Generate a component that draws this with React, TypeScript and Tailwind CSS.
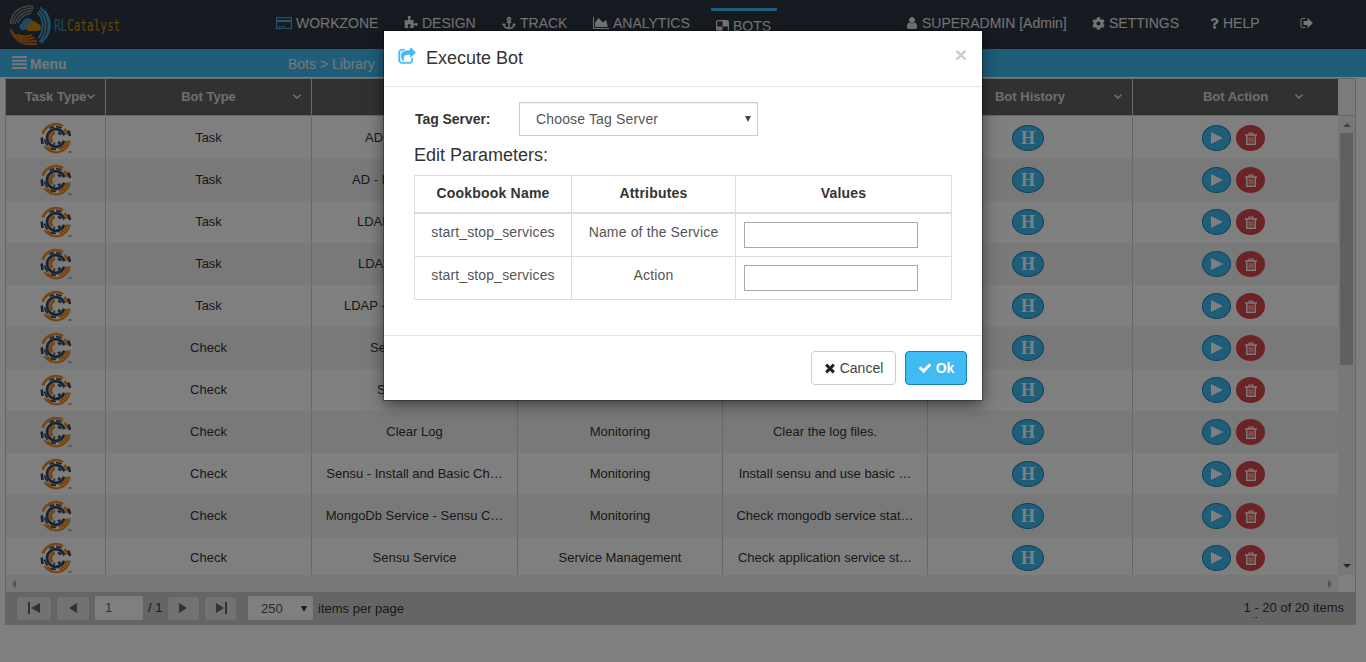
import React from "react";
import { FaAnchor, FaCog, FaQuestion } from "react-icons/fa";

const PATHS = {
  puzzle:
    "M1755 1083q0 81-44.5 135t-123.5 54q-41 0-77.5-17.5t-59-38-56.5-38-71-17.5q-110 0-110 124 0 39 16 115t15 115v5q-22 0-33 1-34 3-97.5 11.5t-115.5 13.5-98 5q-61 0-103-26.5t-42-83.5q0-37 17.5-71t38-56.5 38-59 17.5-77.5q0-79-54-123.5t-135-44.5q-84 0-143 45.5t-59 127.5q0 43 15 83t33.5 64.5 33.5 53 15 50.5q0 45-46 89-37 35-117 35-95 0-245-24-9-2-27.5-4t-27.5-4l-13-2q-1 0-3-1-2 0-2-1v-1024q2 1 17.5 3.5t34 5 21.5 3.5q150 24 245 24 80 0 117-35 46-44 46-89 0-22-15-50.5t-33.5-53-33.5-64.5-15-83q0-82 59-127.5t144-45.5q80 0 134 44.5t54 123.5q0 41-17.5 77.5t-38 59-38 56.5-17.5 71q0 57 42 83.5t103 26.5q64 0 180-15t163-17v2q-1 2-3.5 17.5t-5 34-3.5 21.5q-24 150-24 245 0 80 35 117 44 46 89 46 22 0 50.5-15t53-33.5 64.5-33.5 83-15q82 0 127.5 59t45.5 143z",
  area: "M2048 1536v128h-2048v-1536h128v1408h1920zm-384-1024l256 896h-1664v-576l448-576 576 576z",
  user: "M1536 1399q0 109-62.5 187t-150.5 78h-854q-88 0-150.5-78t-62.5-187q0-85 8.5-160.5t31.5-152 58.5-131 94-89 134.5-34.5q131 128 313 128t313-128q76 0 134.5 34.5t94 89 58.5 131 31.5 152 8.5 160.5zm-256-887q0 159-112.5 271.5t-271.5 112.5-271.5-112.5-112.5-271.5 112.5-271.5 271.5-112.5 271.5 112.5 112.5 271.5z",
  signOut:
    "M704 1440q0 4 1 20t.5 26.5-3 23.5-10 19.5-20.5 6.5h-320q-119 0-203.5-84.5t-84.5-203.5v-704q0-119 84.5-203.5t203.5-84.5h320q13 0 22.5 9.5t9.5 22.5q0 4 1 20t.5 26.5-3 23.5-10 19.5-20.5 6.5h-320q-66 0-113 47t-47 113v704q0 66 47 113t113 47h312l11.5 1 11.5 3 8 5.5 7 9 2 13.5zm928-544q0 26-19 45l-544 544q-19 19-45 19t-45-19-19-45v-288h-448q-26 0-45-19t-19-45v-384q0-26 19-45t45-19h448v-288q0-26 19-45t45-19 45 19l544 544q19 19 19 45z",
  share:
    "M1472 989v259q0 119-84.5 203.5t-203.5 84.5h-832q-119 0-203.5-84.5t-84.5-203.5v-832q0-119 84.5-203.5t203.5-84.5h255q13 0 22.5 9.5t9.5 22.5q0 27-26 32-77 26-133 60-10 4-16 4h-112q-66 0-113 47t-47 113v832q0 66 47 113t113 47h832q66 0 113-47t47-113v-214q0-19 18-29 28-13 54-37 16-16 35-8 21 9 21 29zm237-496l-384 384q-18 19-45 19-12 0-25-5-39-17-39-59v-192h-160q-323 0-438 131-119 137-74 473 3 23-20 34-8 2-12 2-16 0-26-13-10-14-21-31t-39.5-68.5-49.5-99.5-38.5-114-17.5-122q0-49 3.5-91t14-90 28-88 47-81.5 68.5-74 94.5-61.5 124.5-48.5 159.5-30.5 196.5-11h160v-192q0-42 39-59 13-5 25-5 26 0 45 19l384 384q19 19 19 45t-19 45z",
  times:
    "M1490 1322q0 40-28 68l-136 136q-28 28-68 28t-68-28l-294-294-294 294q-28 28-68 28t-68-28l-136-136q-28-28-28-68t28-68l294-294-294-294q-28-28-28-68t28-68l136-136q28-28 68-28t68 28l294 294 294-294q28-28 68-28t68 28l136 136q28 28 28 68t-28 68l-294 294 294 294q28 28 28 68z",
  check:
    "M1671 566q0 40-28 68l-724 724-136 136q-28 28-68 28t-68-28l-136-136-362-362q-28-28-28-68t28-68l136-136q28-28 68-28t68 28l294 295 656-657q28-28 68-28t68 28l136 136q28 28 28 68z",
};

function Glyph({ name, className, box = "0 0 1792 1792" }: { name: keyof typeof PATHS; className: string; box?: string }) {
  return (
    <svg viewBox={box} className={"shrink-0 " + className} fill="currentColor">
      <path d={PATHS[name]} />
    </svg>
  );
}

function Logo() {
  return (
    <svg viewBox="0 0 42 42" className="h-[42px] w-[42px] shrink-0" fill="none">
      <g stroke="#83888c" strokeWidth="1.700">
        <path d="M1.500 20C2 9 10 1.500 24 2" />
        <path d="M3.500 20C5 11 12 4.500 25 4" />
        <path d="M6 20C8 13 14 7.500 24 6.500" />
        <path d="M9 19C11 14 15 10.500 22 9" />
      </g>
      <g stroke="#3aa5cf" strokeWidth="1.800">
        <path d="M31 3.500C42 13 42.500 29 32 39" />
        <path d="M30 6.500C38.500 14 39 28 30.500 38" />
        <path d="M28.500 8.500C35 15 35.500 27 29.500 34" />
        <path d="M35 6C42.500 14 42.500 27 36.500 34" />
      </g>
      <g stroke="#cf6a14" strokeWidth="2">
        <path d="M1.500 25C5 37 16 42.500 28 39.500" />
        <path d="M2 27C8 35.500 17 39.500 28 36.500" />
        <path d="M3 29C10 35 17 36.500 25.500 33.500" />
        <path d="M8 30.500C13 33 18 33 23 31" />
      </g>
      <path d="M16 26h-3a3.700 3.700 0 0 1 0-7 6 6 0 0 1 11-2z" fill="#3498cf" />
      <path d="M19.500 27a3.400 3.400 0 0 1 0-6.500 5.500 5.500 0 0 1 9.700-.5 3.600 3.600 0 0 1 0 7z" fill="#c98716" />
    </svg>
  );
}

function CardIcon() {
  return (
    <svg viewBox="0 0 16 12" className="h-3 w-4 shrink-0" fill="none">
      <rect x=".6" y=".6" width="14.800" height="10.800" stroke="#4a9fe0" strokeWidth="1.200" />
      <path d="M1 4h14" stroke="#4aaee0" strokeWidth="2.200" />
      <path d="M2.500 9.500h2M5.500 9.500h3" stroke="#4aaee0" strokeWidth="1" />
    </svg>
  );
}

function BotsIcon() {
  return (
    <svg viewBox="0 0 13 13" className="h-[13px] w-[13px] shrink-0">
      <rect x=".6" y=".6" width="11.800" height="11.800" rx="1.500" fill="none" stroke="currentColor" strokeWidth="1.200" />
      <path d="M6.500 1H12v5.500H6.500zM1 6.500h5.500V12H1z" fill="currentColor" />
    </svg>
  );
}

function TrashIcon() {
  return (
    <svg viewBox="0 0 12 13" className="h-[13px] w-3 shrink-0" fill="none" stroke="#fff">
      <path d="M0 3h12" strokeWidth="1.500" />
      <path d="M4 2.500V1h4v1.500" strokeWidth="1.200" />
      <path d="M1.800 3.500v8.700h8.400V3.500" strokeWidth="1.400" />
      <path d="M4.200 5v5.500M6 5v5.500M7.800 5v5.500" strokeWidth="1" strokeOpacity=".85" />
    </svg>
  );
}

function ChefIcon() {
  return (
    <svg viewBox="0 0 32 32" className="h-8 w-8 shrink-0" fill="none">
      <g stroke="#f18b21">
        <path d="M2.700 11.500A14 14 0 0 1 23 4" strokeWidth="2.600" />
        <path d="M24.300 7A12.200 12.200 0 0 1 27.700 12.500" strokeWidth="2.800" />
        <path d="M4.300 24A14 14 0 0 0 29.800 18.500" strokeWidth="2.200" />
        <path d="M7 25A12.500 12.500 0 0 0 13 28.500" strokeWidth="2.600" />
        <path d="M19 27.200A11.700 11.700 0 0 0 27.500 18.500" strokeWidth="2.200" />
        <path d="M15 10.800A5.300 5.300 0 0 0 12.500 20" strokeWidth="3" />
      </g>
      <g stroke="#35485f">
        <path d="M24.300 13.200A8.800 8.800 0 1 0 24.300 18.800" strokeWidth="2.800" />
        <path d="M9.500 6.500A11.400 11.400 0 0 1 14 4.900M16 4.600A11.400 11.400 0 0 1 21.500 6" strokeWidth="1.800" />
        <path d="M4.800 17.500A11.400 11.400 0 0 0 7.500 23.600M11 26.300A11.400 11.400 0 0 0 16 27.400" strokeWidth="1.800" />
        <path d="M1.700 15.500l.8 6.500" strokeWidth="2.600" />
        <path d="M28.300 8.500l1.800 5.500" strokeWidth="2.600" />
        <path d="M18 10.500l3 2" strokeWidth="2.500" />
        <path d="M13.500 21.500l1.500.5M18 21.500l2.500-1.500" strokeWidth="2.500" />
      </g>
      <path d="M19.500 16H32" stroke="#fff" strokeWidth="2.600" />
      <path d="M28.500 30h3" stroke="#6b7786" strokeWidth="1.200" />
    </svg>
  );
}

function Chevron() {
  return (
    <svg viewBox="0 0 8 5" className="h-[5px] w-2 shrink-0" fill="none" stroke="#e6e6e6" strokeWidth="1.400">
      <path d="M.5.7L4 4 7.500.7" />
    </svg>
  );
}

const COLS = "grid grid-cols-[100px_206px_206px_205px_205px_205px_205px]";

const rows = [
  { type: "Task", name: "AD", pad: "pl-[53px]" },
  { type: "Task", name: "AD - I", pad: "pl-[40px]" },
  { type: "Task", name: "LDAP", pad: "pl-[45px]" },
  { type: "Task", name: "LDAP", pad: "pl-[46px]" },
  { type: "Task", name: "LDAP -", pad: "pl-[32px]" },
  { type: "Check", name: "Se", pad: "pl-[58px]" },
  { type: "Check", name: "S", pad: "pl-[65px]" },
  { type: "Check", name: "Clear Log", cat: "Monitoring", desc: "Clear the log files." },
  { type: "Check", name: "Sensu - Install and Basic Ch…", cat: "Monitoring", desc: "Install sensu and use basic …" },
  { type: "Check", name: "MongoDb Service - Sensu C…", cat: "Monitoring", desc: "Check mongodb service stat…" },
  { type: "Check", name: "Sensu Service", cat: "Service Management", desc: "Check application service st…" },
];

const cell = "flex items-center justify-center whitespace-nowrap border-r border-[#cfcfcf] overflow-hidden";

function HeadCell({ label, chevron, last }: { label: string; chevron?: string; last?: boolean }) {
  return (
    <div className={"relative flex items-center justify-center " + (last ? "" : "border-r border-[#d4d4d4]")}>
      {label}
      {chevron && (
        <span className={"absolute top-[15px] " + chevron}>
          <Chevron />
        </span>
      )}
    </div>
  );
}

function Row({ r, odd }: { r: (typeof rows)[number]; odd: boolean }) {
  return (
    <div className={COLS + " h-[42px] shrink-0 " + (odd ? "bg-[#f3f3f3]" : "bg-white")}>
      <div className={cell}>
        <ChefIcon />
      </div>
      <div className={cell}>{r.type}</div>
      <div className={r.pad ? "flex items-center whitespace-nowrap border-r border-[#cfcfcf] " + r.pad : cell}>{r.name}</div>
      <div className={cell}>{r.cat}</div>
      <div className={cell}>{r.desc}</div>
      <div className={cell + " pr-1"}>
        <span className="flex h-[26px] w-8 items-center justify-center rounded-[50%] border border-[#1486bd] bg-[#41bbf3] font-['Liberation_Serif',serif] text-[18px] font-bold leading-none text-white">
          H
        </span>
      </div>
      <div className="flex items-center justify-center gap-[5px] pr-[4px]">
        <span className="flex h-[26px] w-[29px] items-center justify-center rounded-[50%] border border-[#1486bd] bg-[#41bbf3]">
          <svg viewBox="0 0 12 12" className="h-3 w-3 fill-white">
            <path d="M0 0l12 6L0 12z" />
          </svg>
        </span>
        <span className="flex h-[26px] w-[29px] items-center justify-center rounded-[50%] bg-[#d9474a] text-white">
          <TrashIcon />
        </span>
      </div>
    </div>
  );
}

function Pager({ className, d }: { className: string; d: string }) {
  return (
    <span className={"flex h-[23px] items-center justify-center rounded-[3px] bg-[#e4e4e4] " + className}>
      <svg viewBox="0 0 12 12" className="h-3 w-3 fill-[#666]">
        <path d={d} />
      </svg>
    </span>
  );
}

function Header() {
  return (
    <header className="flex h-[49px] shrink-0 bg-[#2d3642] text-[14px] text-[#e8e8e8]">
      <div className="flex w-[276px] shrink-0 items-center pl-[9px]">
        <Logo />
        <span className="ml-[3px] mt-[2px] origin-center scale-y-[1.45] font-['DejaVu_Sans_Mono',monospace] text-[11px] leading-none text-[#3d95b8]">
          RL<span className="text-[#d08a0d]">Catalyst</span>
        </span>
      </div>
      <nav className="flex h-[46px] flex-1 items-center whitespace-nowrap">
        <span className="flex w-[128px] items-center gap-1">
          <CardIcon />WORKZONE
        </span>
        <span className="flex w-[98px] items-center gap-1">
          <Glyph name="puzzle" className="h-[14px] w-[14px]" />DESIGN
        </span>
        <span className="flex w-[91px] items-center gap-1">
          <FaAnchor className="h-[14px] w-[14px]" />TRACK
        </span>
        <span className="flex w-[118px] items-center gap-1">
          <Glyph name="area" className="h-[14px] w-4" box="0 0 2048 1792" />ANALYTICS
        </span>
        <span className="flex h-[30px] w-[66px] items-center gap-1 self-start border-t-[3px] border-[#41bbf3] pl-[5px] pt-[3px] mt-2">
          <BotsIcon />BOTS
        </span>
        <span className="ml-[128px] flex w-[187px] items-center gap-[3px]">
          <Glyph name="user" className="h-[14px] w-[14px]" />SUPERADMIN [Admin]
        </span>
        <span className="flex w-[118px] items-center gap-1">
          <FaCog className="h-[13px] w-[13px]" />SETTINGS
        </span>
        <span className="flex w-[90px] items-center gap-1">
          <FaQuestion className="h-[11px] w-[9px]" />HELP
        </span>
        <Glyph name="signOut" className="h-[14px] w-[14px]" />
      </nav>
    </header>
  );
}

function Grid() {
  return (
    <section className="ml-[5px] mt-px flex h-[547px] w-[1351px] shrink-0 flex-col border border-[#cbcbcb] text-[13px] text-[#333]">
      <div className="flex h-[37px] shrink-0 border-b border-[#cbcbcb]">
        <div className={COLS + " w-[1332px] bg-[#636363] font-bold text-[#ddd]"}>
          <HeadCell label="Task Type" chevron="right-[10px]" />
          <HeadCell label="Bot Type" chevron="right-[10px]" />
          <HeadCell label="" />
          <HeadCell label="" />
          <HeadCell label="" />
          <HeadCell label="Bot History" chevron="right-[10px]" />
          <HeadCell label="Bot Action" chevron="right-[35px]" last />
        </div>
        <div className="flex-1 bg-[#f7f7f7]" />
      </div>
      <div className="flex h-[459px] shrink-0">
        <div className="flex w-[1332px] flex-col overflow-hidden bg-white pt-px">
          {rows.map((r, i) => (
            <Row key={i} r={r} odd={i % 2 === 1} />
          ))}
        </div>
        <div className="flex flex-1 flex-col items-center justify-between bg-[#f1f1f1] pt-[7px] pb-[7px]">
          <div className="flex flex-col items-center gap-[6px]">
            <svg viewBox="0 0 8 4" className="h-1 w-2 fill-[#8a8a8a]"><path d="M0 4l4-4 4 4z" /></svg>
            <div className="h-[232px] w-[13px] bg-[#c1c1c1]" />
          </div>
          <svg viewBox="0 0 8 4" className="h-1 w-2 fill-[#505050]"><path d="M0 0h8L4 4z" /></svg>
        </div>
      </div>
      <div className="flex h-[17px] shrink-0 items-center">
        <div className="flex h-full w-[1332px] items-center justify-between bg-[#f1f1f1] pl-[6px] pr-[6px]">
          <svg viewBox="0 0 4 8" className="h-2 w-1 fill-[#a3a3a3]"><path d="M4 0v8L0 4z" /></svg>
          <svg viewBox="0 0 4 8" className="h-2 w-1 fill-[#a3a3a3]"><path d="M0 0v8l4-4z" /></svg>
        </div>
      </div>
      <div className="flex flex-1 items-center bg-[#cbcbcb] pl-[11px] pr-[11px]">
        <Pager className="w-[34px]" d="M0 0h2v12H0zM12 1v10L3 6z" />
        <Pager className="ml-[6px] w-8" d="M10 1v10L2 6z" />
        <span className="ml-[6px] flex h-6 w-12 items-center rounded-[2px] bg-white pl-[10px] text-[#666]">1</span>
        <span className="ml-[5px] w-[20px] whitespace-nowrap">/ 1</span>
        <Pager className="w-[31px]" d="M1 1v10l8-5z" />
        <Pager className="ml-[6px] w-[31px]" d="M10 0h2v12h-2zM1 1v10l8-5z" />
        <span className="ml-3 flex h-6 w-[65px] items-center justify-between rounded-[2px] bg-white pl-[13px] pr-[6px] pt-px text-[#555]">
          250
          <svg viewBox="0 0 6 6" className="h-[6px] w-[6px] fill-[#333]"><path d="M0 0h6L3 6z" /></svg>
        </span>
        <span className="ml-[5px] flex-1 pt-px">items per page</span>
        <span>
          1 <span className="underline decoration-dotted decoration-1 underline-offset-[5px]">-</span> 20 of 20 items
        </span>
      </div>
    </section>
  );
}

const th = "border border-[#ddd] border-b-2 p-0 text-center font-bold text-[#333] tracking-[0.2px]";
const td = "border border-[#ddd] px-2 pt-2 align-top text-center leading-5 tracking-[0.15px]";

function Modal() {
  return (
    <div className="absolute left-[384px] top-[31px] flex h-[369px] w-[598px] flex-col bg-white text-[14px] text-[#555] shadow-[0_0_0_1px_rgba(0,0,0,0.3),0_5px_15px_rgba(0,0,0,0.5)]">
      <div className="flex h-[56px] shrink-0 items-center border-b border-[#e5e5e5] pl-[14px] pr-[15px] text-[#333]">
        <Glyph name="share" className="mb-[3px] h-[18px] w-[18px] stroke-[#41bbf3] [stroke-width:60]  text-[#41bbf3]" />
        <span className="ml-[10px] flex-1 text-[18px]">Execute Bot</span>
        <span className="pb-2 text-[21px] font-bold leading-none text-[#ccc]">×</span>
      </div>
      <div className="flex h-[248px] shrink-0 flex-col px-[30px] pt-[15px]">
        <div className="flex h-[34px] items-center">
          <span className="w-[105px] pl-px font-bold tracking-[-0.05px] text-[#333]">Tag Server:</span>
          <span className="flex h-[34px] w-[239px] items-center justify-between border border-[#ccc] pl-4 pr-[6px] tracking-[0.15px] shadow-[inset_0_1px_1px_rgba(0,0,0,0.075)]">
            Choose Tag Server
            <svg viewBox="0 0 6 6" className="h-[6px] w-[6px] fill-[#444]"><path d="M0 0h6L3 6z" /></svg>
          </span>
        </div>
        <h4 className="mt-[9px] h-[30px] text-[18px] leading-5 text-[#333]">Edit Parameters:</h4>
        <table className="w-[537px] table-fixed border-collapse">
          <colgroup>
            <col className="w-[157px]" />
            <col className="w-[164px]" />
            <col className="w-[216px]" />
          </colgroup>
          <thead>
            <tr className="h-[37px]">
              <th className={th}>Cookbook Name</th>
              <th className={th}>Attributes</th>
              <th className={th}>Values</th>
            </tr>
          </thead>
          <tbody>
            {["Name of the Service", "Action"].map((a, i) => (
              <tr key={a} className={i === 0 ? "h-[44px]" : "h-[43px]"}>
                <td className={td}>start_stop_services</td>
                <td className={td}>{a}</td>
                <td className="border border-[#ddd] px-2 pt-2 pb-0 align-top">
                  <input className="block h-[26px] w-[174px] border border-[#a9a9a9] bg-white" />
                </td>
              </tr>
            ))}
          </tbody>
        </table>
      </div>
      <div className="flex flex-1 items-center justify-end gap-[9px] border-t border-[#e5e5e5] pr-[15px]">
        <span className="flex h-[34px] w-[85px] items-center justify-center gap-[3px] rounded-[4px] border border-[#ccc] pr-px text-[#444]">
          <Glyph name="times" className="h-[14px] w-[14px] text-[#222]" />Cancel
        </span>
        <span className="flex h-[34px] w-[62px] items-center justify-center gap-1 rounded-[4px] border border-[#1486bd] bg-[#41bbf3] font-bold text-white">
          <Glyph name="check" className="h-[14px] w-[14px]" />Ok
        </span>
      </div>
    </div>
  );
}

export default function App() {
  return (
    <div className="relative flex h-[662px] w-[1366px] flex-col overflow-hidden bg-white font-['Liberation_Sans',Arial,sans-serif]">
      <Header />
      <div className="flex h-7 shrink-0 items-center bg-[#41bbf3] text-[14px] text-[#eee]">
        <span className="flex w-[288px] items-center gap-[3px] pl-3 pt-[2px] font-bold">
          <svg viewBox="0 0 15 13" className="mb-[3px] h-[13px] w-[15px] fill-current">
            <path d="M0 0h15v2H0zM0 3.700h15v2H0zM0 7.300h15v2H0zM0 11h15v2H0z" />
          </svg>
          Menu
        </span>
        <span className="pt-[2px]">Bots &gt; Library</span>
      </div>
      <Grid />
      <div className="absolute inset-0 bg-black/50" />
      <Modal />
    </div>
  );
}
